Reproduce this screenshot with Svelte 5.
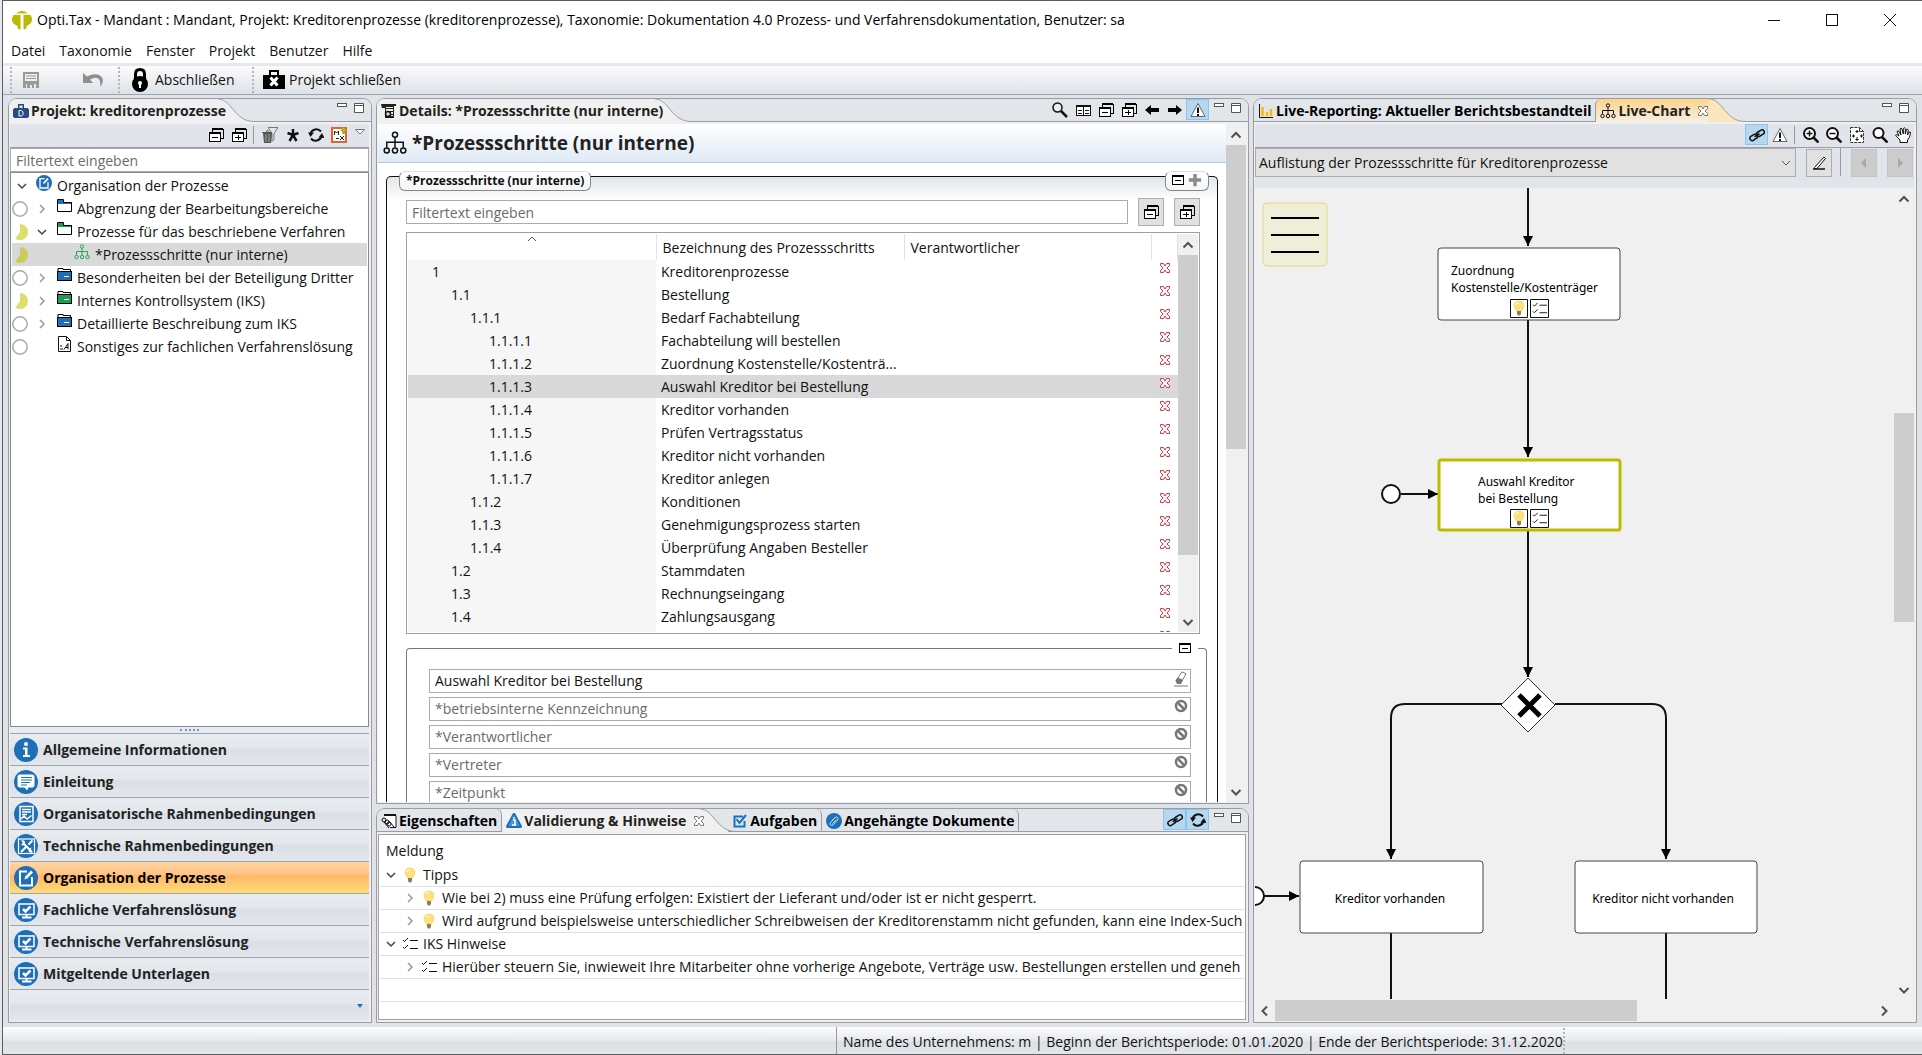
<script>
  const menu = ['Datei', 'Taxonomie', 'Fenster', 'Projekt', 'Benutzer', 'Hilfe'];

  const tree = [
    { label: 'Organisation der Prozesse', level: 0, open: true, icon: 'process' },
    { label: 'Abgrenzung der Bearbeitungsbereiche', level: 1, open: false, icon: 'folderBlue', state: 'empty' },
    { label: 'Prozesse für das beschriebene Verfahren', level: 1, open: true, icon: 'folderGreen', state: 'partial' },
    { label: '*Prozessschritte (nur interne)', level: 2, icon: 'orgGreen', state: 'partial', selected: true },
    { label: 'Besonderheiten bei der Beteiligung Dritter', level: 1, open: false, icon: 'folderBlueFull', state: 'empty' },
    { label: 'Internes Kontrollsystem (IKS)', level: 1, open: false, icon: 'folderGreenFull', state: 'partial' },
    { label: 'Detaillierte Beschreibung zum IKS', level: 1, open: false, icon: 'folderBlueFull', state: 'empty' },
    { label: 'Sonstiges zur fachlichen Verfahrenslösung', level: 1, icon: 'doc', state: 'empty' }
  ];

  const sections = [
    { label: 'Allgemeine Informationen', icon: 'info' },
    { label: 'Einleitung', icon: 'speech' },
    { label: 'Organisatorische Rahmenbedingungen', icon: 'report' },
    { label: 'Technische Rahmenbedingungen', icon: 'tools' },
    { label: 'Organisation der Prozesse', icon: 'process', active: true },
    { label: 'Fachliche Verfahrenslösung', icon: 'screen' },
    { label: 'Technische Verfahrenslösung', icon: 'screen' },
    { label: 'Mitgeltende Unterlagen', icon: 'screen' }
  ];

  const steps = [
    ['1', 'Kreditorenprozesse'],
    ['1.1', 'Bestellung'],
    ['1.1.1', 'Bedarf Fachabteilung'],
    ['1.1.1.1', 'Fachabteilung will bestellen'],
    ['1.1.1.2', 'Zuordnung Kostenstelle/Kostenträ...'],
    ['1.1.1.3', 'Auswahl Kreditor bei Bestellung'],
    ['1.1.1.4', 'Kreditor vorhanden'],
    ['1.1.1.5', 'Prüfen Vertragsstatus'],
    ['1.1.1.6', 'Kreditor nicht vorhanden'],
    ['1.1.1.7', 'Kreditor anlegen'],
    ['1.1.2', 'Konditionen'],
    ['1.1.3', 'Genehmigungsprozess starten'],
    ['1.1.4', 'Überprüfung Angaben Besteller'],
    ['1.2', 'Stammdaten'],
    ['1.3', 'Rechnungseingang'],
    ['1.4', 'Zahlungsausgang'],
    ['', '']
  ];
  const selectedStep = '1.1.1.3';

  const fields = ['*betriebsinterne Kennzeichnung', '*Verantwortlicher', '*Vertreter', '*Zeitpunkt'];

  const messages = [
    { text: 'Tipps', level: 0, open: true, icon: 'bulb' },
    { text: 'Wie bei 2) muss eine Prüfung erfolgen: Existiert der Lieferant und/oder ist er nicht gesperrt.', level: 1, icon: 'bulb' },
    { text: 'Wird aufgrund beispielsweise unterschiedlicher Schreibweisen der Kreditorenstamm nicht gefunden, kann eine Index-Such', level: 1, icon: 'bulb' },
    { text: 'IKS Hinweise', level: 0, open: true, icon: 'checks' },
    { text: 'Hierüber steuern Sie, inwieweit Ihre Mitarbeiter ohne vorherige Angebote, Verträge usw. Bestellungen erstellen und geneh', level: 1, icon: 'checks' }
  ];

  let step = $state('Auswahl Kreditor bei Bestellung');

  const indent = (nr) => 24 + 19 * (nr.split('.').length - 1);

  const folder = (color, full) =>
    full
      ? `<path d="M2 4V1.500h5v1h7.500V5" fill="#fff" stroke="#000"/><rect x="1.500" y="4.500" width="14" height="9" fill="${color}" stroke="#000"/><path d="M8 9.500h5" stroke="#fff"/>`
      : `<path d="M1.500 13.500V1.500H7.500V4.500H15.500V13.500Z" fill="#fff" stroke="#000"/><path d="M2 6V2h5v3h8V6Z" fill="${color}"/><path d="M7.500 4.500h8" stroke="#000"/>`;
  const org = (color) =>
    `<g fill="none" stroke="${color}"><circle cx="8" cy="2.500" r="1.700"/><path d="M8 4v7M2.500 11V7.500h11V11"/><circle cx="2.500" cy="13" r="1.700"/><circle cx="8" cy="13" r="1.700"/><circle cx="13.500" cy="13" r="1.700"/></g>`;
  const disc = '<circle cx="12" cy="12" r="12" fill="#1d70b8"/>';

  // [viewBox size, markup]
  const icons = {
    logo: [20, '<path d="M4 3.500Q10-2 16 3.500Z" fill="#bfc200"/><path d="M1.500 5H8.500V19.500Q6.500 19.500 5.500 18V16Q-3 12 1.500 5ZM18.500 5H11.500V19.500Q13.500 19.500 14.500 18V16Q23 12 18.500 5Z" fill="#b8bb00"/>'],
    save: [16, '<path d="M0 0h16v16h-3v-4h-2v4H9v-3H7v3H4v-4H3v4H0Z" fill="#999"/><path d="M2 2h12v7H2Z" fill="#eee"/><path d="M3 4h10M3 6.500h10" stroke="#999"/>'],
    undo: [20, '<path d="M0 3v10h10L7 9.500Q14 6 16.500 10 18 13 17 17 21.500 12 19 7.500 14 1.500 4 6.500Z" fill="#8e8e8e"/>'],
    lock: [24, '<path d="M7.500 12V6q0-4.500 4.500-4.500T16.500 6v6" fill="none" stroke="#000" stroke-width="3"/><ellipse cx="12" cy="16" rx="8" ry="8" fill="#000"/><circle cx="12" cy="15" r="2" fill="#fff"/><path d="M11 15h2v5h-2Z" fill="#fff"/>'],
    closeProject: [22, '<path d="M0 6h6V1h10v5h6v14H0ZM8 6h6V3H8Z" fill="#000"/><path d="M7.500 8.500l7 8m0-8l-7 8" stroke="#fff" stroke-width="3"/>'],
    briefcase: [16, '<path d="M1 5h4V1h6v4h4v10H1ZM6.500 5h3V2.500h-3Z" fill="#2a4a86"/><path d="M0 6h16v8H0Z" fill="#2a4a86"/><path d="M6 7.500h2.500l1.500 1.500v2.500L8.500 13H6Z" fill="none" stroke="#fff"/>'],
    collapse: [16, '<g shape-rendering="crispEdges"><path d="M4 5V2h11v9h-2" fill="none" stroke="#000"/><path d="M4 2h11" stroke="#000" stroke-width="2"/><rect x="1.500" y="6.500" width="11" height="8" fill="#fff" stroke="#000"/><path d="M1 6h12" stroke="#000" stroke-width="2"/><path d="M4 10.500h6" stroke="#000"/></g>'],
    expand: [16, '<g shape-rendering="crispEdges"><path d="M4 5V2h11v9h-2" fill="none" stroke="#000"/><path d="M4 2h11" stroke="#000" stroke-width="2"/><rect x="1.500" y="6.500" width="11" height="8" fill="#fff" stroke="#000"/><path d="M1 6h12" stroke="#000" stroke-width="2"/><path d="M4 10.500h6M7.500 8v5" stroke="#000"/></g>'],
    single: [16, '<g shape-rendering="crispEdges"><rect x="2.500" y="3.500" width="11" height="9" fill="#fff" stroke="#000"/><path d="M2 4h12" stroke="#000" stroke-width="2"/><path d="M5 8.500h6" stroke="#000"/></g>'],
    plus: [16, '<path d="M8 1v14M1 8h14" stroke="#8b8b8b" stroke-width="4"/>'],
    trashFilter: [16, '<path d="M6 .5h10l-4 6v6l-2 2V6.500Z" fill="#e8e8e8" stroke="#777"/><path d="M1 6h9l-1 10H2Z" fill="#555"/><path d="M4 7v8M7 7v8" stroke="#aaa"/><path d="M0 5.500h10M4 4h3" stroke="#555"/>'],
    star: [16, '<path d="M8 2v6M2.500 6L8 8l5.500-2M4.500 14L8 8l3.500 6" fill="none" stroke="#111" stroke-width="2.500"/>'],
    refresh: [16, '<path d="M13 4.500A6 6 0 0 0 2.500 7M3 11.500A6 6 0 0 0 13.500 9" fill="none" stroke="#111" stroke-width="2"/><path d="M0 5.500h6L2.500 10ZM10.500 10.500L14 6l2.500 5Z" fill="#111"/>'],
    mapping: [16, '<rect x="1" y="1" width="14" height="14" fill="#fff" stroke="#e8612d" stroke-width="2"/><path d="M3.500 8V4l2 2 2-2v4M9 9l4 4m0-4l-4 4M5 11.500h3" fill="none" stroke="#222"/><path d="M12.500 0L16 4h-2v3h-3V4H9Z" fill="#a9ba1c"/>'],
    menuDown: [12, '<path d="M1.500 3.500h9L6 8Z" fill="#fff" stroke="#777"/>'],
    min: [12, '<rect x="1.500" y="1.500" width="9" height="3" fill="#fff" stroke="#555"/>'],
    max: [12, '<path d="M1.500 1.500h9v9h-9ZM1.500 3.500h9" fill="#fff" stroke="#555"/>'],
    details: [16, '<path d="M0 1h15v2h-2v12H4V5H1Z" fill="#222"/><path d="M5 4h7v9H5Z" fill="#eee"/><path d="M5 5.500h7M8 8.500h4M10 11.500h2" stroke="#222"/><circle cx="7" cy="11" r="2.500" fill="#ddd" stroke="#111" stroke-width="1.500"/><path d="M9 13l2 2" stroke="#111"/>'],
    props: [16, '<path d="M3 2.500h12v12H9" fill="#fff" stroke="#111"/><path d="M3 2h12" stroke="#111" stroke-width="2"/><g fill="none" stroke="#111"><circle cx="3" cy="7" r="2"/><circle cx="6" cy="9" r="2"/><circle cx="8" cy="11" r="2"/><path d="M8 8l5 6M3 9l5 6"/></g>'],
    org: [16, org('#111')],
    orgGreen: [16, org('#2aa35a')],
    search: [16, '<circle cx="5.500" cy="5.500" r="4.500" fill="#e8edf0" stroke="#111" stroke-width="1.500"/><path d="M9 9l6 6" stroke="#111" stroke-width="2.500"/>'],
    zoomIn: [16, '<circle cx="6.500" cy="6.500" r="5.500" fill="#fff" stroke="#111" stroke-width="2"/><path d="M10.500 10.500l5 5" stroke="#111" stroke-width="2.500"/><path d="M3.500 6.500h6m-3-3v6" stroke="#111" stroke-width="1.500"/>'],
    zoomOut: [16, '<circle cx="6.500" cy="6.500" r="5.500" fill="#fff" stroke="#111" stroke-width="2"/><path d="M10.500 10.500l5 5" stroke="#111" stroke-width="2.500"/><path d="M3.500 6.500h6" stroke="#111" stroke-width="1.500"/>'],
    zoomAll: [16, '<circle cx="6.500" cy="6" r="5" fill="#fff" stroke="#111" stroke-width="2"/><path d="M10 10l5.500 5.500" stroke="#111" stroke-width="2.500"/>'],
    columns: [16, '<g shape-rendering="crispEdges"><rect x="1.500" y="3.500" width="14" height="10" fill="#fff" stroke="#111"/><path d="M1 4h15" stroke="#111" stroke-width="2"/><path d="M8.500 4v10M3 8.500h4M3 11.500h4M10 8.500h4M10 11.500h4" stroke="#111"/></g>'],
    back: [16, '<path d="M1 8l6-5v3h8v4H7v3Z" fill="#000"/>'],
    forward: [16, '<path d="M15 8L9 3v3H1v4h8v3Z" fill="#000"/>'],
    warn: [16, '<path d="M8 1.500l7 13H1Z" fill="#fff" stroke="#666"/><path d="M8 5.500V11M8 12v2" stroke="#111" stroke-width="2"/>'],
    bars: [16, '<path d="M1.500 1v13.500H15" fill="none" stroke="#111"/><path d="M4.500 4v9M9 9v4M13 6v7" stroke="#fbb900" stroke-width="2.500"/>'],
    close: [12, '<path d="M1.500 1.500h3L6 4l1.500-2.500h3v2L8 6l2.500 2.500v2h-3L6 8l-1.500 2.500h-3v-2L4 6 1.500 3.500Z" fill="#fff" stroke="#777"/>'],
    remove: [12, '<path d="M1.500 1.500h3L6 4l1.500-2.500h3v2L8 6l2.500 2.500v2h-3L6 8l-1.500 2.500h-3v-2L4 6 1.500 3.500Z" fill="#fff5f5" stroke="#cc3d4a"/>'],
    link: [16, '<g fill="none" stroke="#111" stroke-width="1.500" transform="rotate(-32 8 8)"><rect x="0" y="6" width="8" height="4.500" rx="2"/><rect x="8" y="6" width="8" height="4.500" rx="2"/><path d="M5 8.200h6"/></g>'],
    page: [16, '<path d="M1.500 .5h9l4 4v11h-13Z" fill="#fff" stroke="#333" stroke-dasharray="3 1"/><path d="M10.500 .5v4h4" fill="none" stroke="#333"/><path d="M8 3v3m0 4v4M3 9h3m5 0h3M6.500 4.500h3M6.500 12.500h3M4.500 7.500v3M12.500 7.500v3" stroke="#111"/>'],
    hand: [16, '<path d="M5 15.500V13Q3 11 .7 8.500q0-1.800 3.300.5L2 4.500q1-1.500 2 0L6 8 5 2q1-1.500 2 0L8.300 7V1.500q1.200-1.500 2 0V7l1.200-4.500q1.500-1 1.700.8L12.500 8l1.500-3q1.500-.5 1.500 1Q15 11 12.500 13v2.500Z" fill="#fff" stroke="#111"/>'],
    pen: [16, '<path d="M3.500 12.500L13 2l1.500 1.500L6 13.500H3.500Z" fill="#fff" stroke="#111"/><path d="M2 14h12" stroke="#111" stroke-width="1.500"/>'],
    prev: [16, '<path d="M10 3v10L5 8Z" fill="#a8a8a8"/>'],
    next: [16, '<path d="M6 3v10l5-5Z" fill="#a8a8a8"/>'],
    eraser: [16, '<path d="M3 9.500L9 .8l4 2L8 11.500q-3 1-5-2Z" fill="#fff" stroke="#777"/><path d="M2.500 9.500L5 6.500l5 2.500L8 13H4Z" fill="#777"/><path d="M1 15h14" stroke="#777"/>'],
    blocked: [14, '<circle cx="7" cy="7" r="5" fill="#fff" stroke="#777" stroke-width="2.500"/><path d="M3.500 3.500l7 7" stroke="#777" stroke-width="2.500"/>'],
    hint: [16, '<path d="M8 1.500l6.500 12H1.500Z" fill="#fff" stroke="#1d70b8" stroke-width="3" stroke-linejoin="round"/><path d="M8 2l5.500 11h-11Z" fill="#4b93d4"/><path d="M7 7h2v5h1M6 12h3M8 4v1.500" fill="none" stroke="#fff" stroke-width="1.500"/>'],
    task: [16, '<path d="M11 3.500H2.500v10h10V8" fill="#d8eafa" stroke="#1d70b8" stroke-width="2"/><path d="M4.500 6l3 4 6.500-8" fill="none" stroke="#1d70b8" stroke-width="2"/>'],
    attach: [16, '<circle cx="8" cy="8" r="8" fill="#1d70b8"/><path d="M5 9l4-4.500q1.500-1 2.500 0t0 2.500L7 12q-1.500 1-2.500 0t0-2.500L9 5M6.500 10.500L10 7" fill="none" stroke="#cfe3f5"/>'],
    bulb: [16, '<path d="M3 5.500Q3 1 8 1t5 4.500Q13 8 10.500 11h-5Q3 8 3 5.500Z" fill="#ffe07a" stroke="#f0c850" stroke-width=".5"/><path d="M5 5q0-2 3-2.500" fill="none" stroke="#fff4c0" stroke-width="1.500"/><path d="M6 11h4v3l-1 1.500H7L6 14Z" fill="#8a8060"/>'],
    checks: [16, '<path d="M1 4l1.500 1.500L6 2M1 11l1.500 1.500L6 9M8 4.500h8M8 12.500h8" fill="none" stroke="#111"/>'],
    folderBlue: [16, folder('#1d70b8', false)],
    folderGreen: [16, folder('#1f9c52', false)],
    folderBlueFull: [16, folder('#1d70b8', true)],
    folderGreenFull: [16, folder('#1f9c52', true)],
    doc: [16, '<path d="M2.500 .5h8l4 4v11h-12Z" fill="#fff" stroke="#111"/><path d="M10.500 .5v4h4M4 13h3M8 13.500l4-6v6M9 11.500h3M4 10h2" fill="none" stroke="#111"/>'],
    info: [24, disc + '<path d="M9 9.500h4.500V17H16v2H9v-2h2v-5.500H9Z" fill="#fff"/><circle cx="12" cy="6" r="2" fill="#fff"/>'],
    speech: [24, disc + '<path d="M6 4.500h12q2.500 0 2.500 2.500v8q0 2.500-2.500 2.500h-3.500L13 20.500l-2.500-3H6Q3.500 17.500 3.500 15V7Q3.500 4.500 6 4.500Z" fill="#fff"/><path d="M7 7.500h11M7 10h11M7 12.500h9M7 15h6" stroke="#1d70b8"/>'],
    report: [24, disc + '<rect x="6" y="4.500" width="13" height="15" fill="none" stroke="#fff" stroke-width="1.500"/><path d="M8 7.500h9M8 10h9M8 12.500h5M7 17l3-3 3 3 4.500-3.500" fill="none" stroke="#fff" stroke-width="1.500"/>'],
    tools: [24, disc + '<rect x="4.500" y="5" width="16" height="14.500" fill="none" stroke="#fff" stroke-width="1.200"/><path d="M9 9l9 9M18.500 6.500l-4 4M12 13l-5 5" stroke="#fff" stroke-width="2"/><path d="M7 6.500q4-1 4 2.500t-4 2l2-2ZM18.500 18.500q-4 .5-4-2t3-3l-1 2.500Z" fill="#fff"/>'],
    process: [24, disc + '<path d="M13 5.500H6v14h12V11" fill="none" stroke="#fff" stroke-width="2"/><path d="M10.500 13.500l.8-3L17 4.500l2 2-5.700 6Z" fill="#fff"/>'],
    screen: [24, disc + '<rect x="5" y="6" width="15" height="10.500" fill="none" stroke="#fff" stroke-width="1.500"/><path d="M9 11l2.500 2.500L16.500 8.500" fill="none" stroke="#fff" stroke-width="2.500"/><path d="M12.500 17v2.500M8 19.500h9.500" stroke="#fff" stroke-width="2"/>'],
    empty: [16, '<circle cx="8" cy="8" r="7.200" fill="#fff" stroke="#aaa" stroke-width="1.500"/>'],
    partial: [16, '<path d="M8 0A8 8 0 0 1 16 8 8 8 0 0 1 3.300 14.500L8 8Z" fill="#dede6c"/>'],
    partialSel: [16, '<path d="M8 0A8 8 0 0 1 16 8 8 8 0 0 1 3.300 14.500L8 8Z" fill="#cccc58"/>'],
    down: [12, '<path d="M2 4l4 4 4-4" fill="none" stroke="#444" stroke-width="1.500"/>'],
    right: [12, '<path d="M4 2l4 4-4 4" fill="none" stroke="#999" stroke-width="1.500"/>'],
    sbUp: [12, '<path d="M1.500 8.500L6 4l4.500 4.500" fill="none" stroke="#505050" stroke-width="2"/>'],
    sbDown: [12, '<path d="M1.500 4L6 8.500 10.500 4" fill="none" stroke="#505050" stroke-width="2"/>'],
    sbLeft: [12, '<path d="M8 1.500L3.500 6 8 10.500" fill="none" stroke="#505050" stroke-width="2"/>'],
    sbRight: [12, '<path d="M4 1.500L8.500 6 4 10.500" fill="none" stroke="#505050" stroke-width="2"/>'],
    winMin: [14, '<path d="M1 7.500h12" stroke="#111"/>'],
    winMax: [14, '<rect x="1.500" y="1.500" width="11" height="11" fill="none" stroke="#111"/>'],
    winClose: [14, '<path d="M1 1l12 12M13 1L1 13" stroke="#111"/>']
  };
</script>

{#snippet icon(name, size)}
  {@const box = icons[name]}
  <svg class="icon" width={size ?? box[0]} height={size ?? box[0]} viewBox="0 0 {box[0]} {box[0]}" aria-hidden="true">{@html box[1]}</svg>
{/snippet}

{#snippet tool(name, label, on)}
  <button class="tool" class:on aria-label={label}>{@render icon(name, 16)}</button>
{/snippet}

{#snippet windowButtons()}
  <button class="mini" aria-label="Minimieren">{@render icon('min')}</button>
  <button class="mini last" aria-label="Maximieren">{@render icon('max')}</button>
{/snippet}

{#snippet curve(fill)}
  <svg class="curve" width="36" height="23" viewBox="0 0 36 23" aria-hidden="true">
    <path d="M0 0C14 0 16 22.500 36 22.500V23H0Z" fill={fill} />
    <path d="M0 0C14 0 16 22.500 36 22.500" fill="none" stroke="#999da3" />
  </svg>
{/snippet}

{#snippet scrollbar(before, thumb, after, horizontal)}
  <div class="scrollbar" class:horizontal>
    <button aria-label="Zurück">{@render icon(horizontal ? 'sbLeft' : 'sbUp')}</button>
    <span style:flex-grow={before}></span>
    <span class="thumb" style:flex-grow={thumb}></span>
    <span style:flex-grow={after}></span>
    <button aria-label="Weiter">{@render icon(horizontal ? 'sbRight' : 'sbDown')}</button>
  </div>
{/snippet}

<div class="window">
  <header class="titlebar">
    {@render icon('logo')}
    <h1>Opti.Tax - Mandant : Mandant, Projekt: Kreditorenprozesse (kreditorenprozesse), Taxonomie: Dokumentation 4.0 Prozess- und Verfahrensdokumentation, Benutzer: sa</h1>
    <button aria-label="Fenster minimieren">{@render icon('winMin')}</button>
    <button aria-label="Fenster maximieren">{@render icon('winMax')}</button>
    <button aria-label="Fenster schließen">{@render icon('winClose')}</button>
  </header>

  <nav class="menu">
    {#each menu as item}
      <button>{item}</button>
    {/each}
  </nav>

  <div class="toolbar">
    <span class="grip"></span>
    <button class="save" aria-label="Speichern">{@render icon('save', 16)}</button>
    <button class="undo" aria-label="Rückgängig">{@render icon('undo', 20)}</button>
    <span class="grip"></span>
    <button class="lock">{@render icon('lock', 24)}Abschließen</button>
    <span class="grip"></span>
    <button class="close-project">{@render icon('closeProject', 22)}Projekt schließen</button>
  </div>

  <main>
    <section class="panel">
      <div class="tabs">
        <div class="tab active">{@render icon('briefcase', 16)}<span>Projekt: kreditorenprozesse</span></div>
        {@render curve('#f0f0f0')}
        <div class="tab-rest">{@render windowButtons()}</div>
      </div>
      <div class="panel-body">
        <div class="view-tools">
          {@render tool('collapse', 'Alle zuklappen')}
          {@render tool('expand', 'Alle aufklappen')}
          <span class="sep"></span>
          {@render tool('trashFilter', 'Filter löschen')}
          {@render tool('star', 'Pflichtfelder')}
          {@render tool('refresh', 'Aktualisieren')}
          {@render tool('mapping', 'Zuordnung')}
          <button class="drop" aria-label="Menü">{@render icon('menuDown')}</button>
        </div>
        <input class="tree-filter" placeholder="Filtertext eingeben" aria-label="Filtertext" />
        <ul class="tree">
          {#each tree as node}
            <li class="level{node.level}" class:selected={node.selected}>
              <span class="state">
                {#if node.state}{@render icon(node.selected ? 'partialSel' : node.state, 16)}{/if}
              </span>
              <span class="twisty">
                {#if node.open !== undefined}{@render icon(node.open ? 'down' : 'right')}{/if}
              </span>
              {@render icon(node.icon, 16)}
              <span>{node.label}</span>
            </li>
          {/each}
        </ul>
        <div class="sash"><span></span></div>
        <nav class="stack">
          {#each sections as section}
            <button class:active={section.active}>{@render icon(section.icon)}{section.label}</button>
          {/each}
          <div class="stack-end"><svg width="6" height="4" viewBox="0 0 6 4" aria-hidden="true"><path d="M0 0h6L3 4Z" fill="#2a6cc0" /></svg></div>
        </nav>
      </div>
    </section>

    <div class="center">
      <section class="panel details">
        <div class="tabs">
          <div class="tab active">{@render icon('details', 16)}<span>Details: *Prozessschritte (nur interne)</span></div>
          {@render curve('#f0f0f0')}
          <div class="tab-rest">
            {@render tool('search', 'Suchen')}
            {@render tool('columns', 'Spalten')}
            {@render tool('collapse', 'Alle zuklappen')}
            {@render tool('expand', 'Alle aufklappen')}
            {@render tool('back', 'Zurück')}
            {@render tool('forward', 'Vor')}
            {@render tool('warn', 'Validierung', true)}
            {@render windowButtons()}
          </div>
        </div>
        <div class="panel-body row">
          <div class="form">
            <div class="form-head">{@render icon('org', 24)}<h2>*Prozessschritte (nur interne)</h2></div>
            <div class="group">
              <h3 class="group-title">*Prozessschritte (nur interne)</h3>
              <div class="group-tools">
                <button aria-label="Zuklappen">{@render icon('single', 16)}</button>
                <button aria-label="Hinzufügen">{@render icon('plus', 14)}</button>
              </div>
              <div class="filter-row">
                <input placeholder="Filtertext eingeben" aria-label="Filtertext Prozessschritte" />
                <button class="push" aria-label="Alle zuklappen">{@render icon('collapse', 16)}</button>
                <button class="push" aria-label="Alle aufklappen">{@render icon('expand', 16)}</button>
              </div>
              <div class="grid">
                <div class="grid-view">
                  <table>
                    <colgroup><col class="c-nr" /><col class="c-name" /><col /><col class="c-del" /></colgroup>
                    <thead>
                      <tr>
                        <th class="sorted" aria-label="Nummer"><svg class="sort" width="10" height="6" viewBox="0 0 10 6" aria-hidden="true"><path d="M1 5l4-4 4 4" fill="none" stroke="#555" /></svg></th>
                        <th>Bezeichnung des Prozessschritts</th>
                        <th>Verantwortlicher</th>
                        <th aria-label="Löschen"></th>
                      </tr>
                    </thead>
                    <tbody>
                      {#each steps as [nr, name]}
                        <tr class:selected={nr === selectedStep}>
                          <td style:padding-left="{indent(nr)}px">{nr}</td>
                          <td>{name}</td>
                          <td></td>
                          <td class="del"><button aria-label="Löschen">{@render icon('remove')}</button></td>
                        </tr>
                      {/each}
                    </tbody>
                  </table>
                </div>
                {@render scrollbar(0, 300, 56)}
              </div>
              <div class="fields">
                <div class="fields-tools"><button aria-label="Zuklappen">{@render icon('single', 16)}</button></div>
                <div class="field">
                  <input bind:value={step} aria-label="Bezeichnung" />
                  <button aria-label="Leeren">{@render icon('eraser', 16)}</button>
                </div>
                {#each fields as field}
                  <div class="field">
                    <input placeholder={field} aria-label={field} />
                    <button aria-label="Nicht relevant">{@render icon('blocked', 14)}</button>
                  </div>
                {/each}
              </div>
            </div>
          </div>
          {@render scrollbar(0, 304, 332)}
        </div>
      </section>

      <section class="panel messages">
        <div class="tabs">
          <button class="tab edge">{@render icon('props', 16)}<span>Eigenschaften</span></button>
          <div class="tab active">{@render icon('hint', 16)}<span>Validierung &amp; Hinweise</span>{@render icon('close')}</div>
          {@render curve('#f0f0f0')}
          <button class="tab edge">{@render icon('task', 16)}<span>Aufgaben</span></button>
          <button class="tab edge">{@render icon('attach', 16)}<span>Angehängte Dokumente</span></button>
          <div class="tab-rest">
            {@render tool('link', 'Verknüpfen', true)}
            {@render tool('refresh', 'Aktualisieren', true)}
            {@render windowButtons()}
          </div>
        </div>
        <div class="panel-body">
          <div class="message-view">
            <table>
              <thead><tr><th>Meldung</th></tr></thead>
              <tbody>
                {#each messages as message}
                  <tr>
                    <td>
                      <div class="message" class:child={message.level}>
                        {@render icon(message.open ? 'down' : 'right')}
                        {@render icon(message.icon, 16)}
                        <span>{message.text}</span>
                      </div>
                    </td>
                  </tr>
                {/each}
                <tr><td></td></tr>
              </tbody>
            </table>
          </div>
        </div>
      </section>
    </div>

    <section class="panel">
      <div class="tabs">
        <button class="tab">{@render icon('bars', 16)}<span>Live-Reporting: Aktueller Berichtsbestandteil</span></button>
        <div class="tab active chart-tab">{@render icon('org', 16)}<span>Live-Chart</span>{@render icon('close')}</div>
        {@render curve('#fbe6bd')}
        <div class="tab-rest">{@render windowButtons()}</div>
      </div>
      <div class="panel-body">
        <div class="view-tools">
          {@render tool('link', 'Verknüpfen', true)}
          {@render tool('warn', 'Validierung')}
          <span class="sep"></span>
          {@render tool('zoomIn', 'Vergrößern')}
          {@render tool('zoomOut', 'Verkleinern')}
          {@render tool('page', 'Einpassen')}
          {@render tool('zoomAll', 'Originalgröße')}
          {@render tool('hand', 'Verschieben')}
        </div>
        <div class="chart-row">
          <div class="combo">
            <select aria-label="Diagramm">
              <option>Auflistung der Prozessschritte für Kreditorenprozesse</option>
            </select>
            <svg width="10" height="6" viewBox="0 0 10 6" aria-hidden="true"><path d="M1 1l4 4 4-4" fill="none" stroke="#555" /></svg>
          </div>
          <button class="push" aria-label="Bearbeiten">{@render icon('pen', 16)}</button>
          <span class="rule"></span>
          <button class="push off" disabled aria-label="Vorheriges">{@render icon('prev', 16)}</button>
          <button class="push off" disabled aria-label="Nächstes">{@render icon('next', 16)}</button>
        </div>
        <div class="chart-view">
          <svg class="diagram" role="img" aria-label="Prozessdiagramm">
            <defs>
              <marker id="arrow" viewBox="0 0 10 10" refX="10" refY="5" markerWidth="10" markerHeight="10" markerUnits="userSpaceOnUse" orient="auto">
                <path d="M0 0l10 5-10 5Z" />
              </marker>
            </defs>
            <rect x="8" y="15" width="64" height="63" rx="4" fill="#efefd9" stroke="#dcdc7e" />
            <path d="M16 30h48M16 47h48M16 64h48" stroke="#000" stroke-width="2" />

            <g fill="none" stroke="#111" stroke-width="2" marker-end="url(#arrow)">
              <path d="M273 0V58" />
              <path d="M273 132V269" />
              <path d="M273 343V489" />
              <path d="M146 306H183" />
              <path d="M247 516H150Q136 516 136 530V671" />
              <path d="M300 516H397Q411 516 411 530V671" />
              <path d="M9 708H44" />
            </g>
            <path d="M136 745V811M411 745V811" stroke="#111" stroke-width="2" />
            <circle cx="136" cy="306" r="9" fill="#fff" stroke="#111" stroke-width="2" />
            <circle cx="0" cy="708" r="9" fill="#fff" stroke="#111" stroke-width="2" />
            <path d="M273 490l27 27-27 27-27-27Z" fill="#fff" stroke="#333" />
            <path d="M264 507l21 21m0-21l-21 21" stroke="#000" stroke-width="5" />

            <rect class="node" x="183" y="60" width="182" height="72" rx="3" />
            <rect class="node current" x="184" y="272" width="181" height="70" rx="2" />
            <rect class="node" x="45" y="673" width="183" height="72" rx="3" />
            <rect class="node" x="320" y="673" width="182" height="72" rx="3" />

            <text x="196" y="87">Zuordnung</text>
            <text x="196" y="104">Kostenstelle/Kostenträger</text>
            <text x="223" y="298">Auswahl Kreditor</text>
            <text x="223" y="315">bei Bestellung</text>
            <text x="135" y="715" text-anchor="middle">Kreditor vorhanden</text>
            <text x="408" y="715" text-anchor="middle">Kreditor nicht vorhanden</text>

            {#each [111, 321] as y}
              <g transform="translate(255 {y})">
                <path d="M.5 .5h17v18H.5ZM20.500 .5h18v18h-18Z" fill="#fff" stroke="#111" />
                <svg x="1" y="1" width="16" height="16" viewBox="0 0 16 16">{@html icons.bulb[1]}</svg>
                <svg x="22" y="2" width="15" height="15" viewBox="0 0 16 16">{@html icons.checks[1]}</svg>
              </g>
            {/each}
          </svg>
          {@render scrollbar(203, 209, 356)}
          {@render scrollbar(0, 360, 236, true)}
        </div>
      </div>
    </section>
  </main>

  <footer class="status">
    <span class="status-space"></span>
    <p>Name des Unternehmens: m | Beginn der Berichtsperiode: 01.01.2020 | Ende der Berichtsperiode: 31.12.2020</p>
    <span class="grip"></span>
  </footer>
</div>

<style>
  :global(body) {
    margin: 0;
    background: #e4e8ee;
  }
  .window {
    display: flex;
    flex-direction: column;
    box-sizing: border-box;
    height: 100vh;
    margin-left: 2px;
    overflow: hidden;
    border: 1px solid #5c5c5c;
    border-right: 0;
    background: #dadee4;
    color: #111;
    font: 14px/20px 'Open Sans', 'Noto Sans', sans-serif;
  }
  button,
  input,
  select {
    box-sizing: border-box;
    margin: 0;
    padding: 0;
    border: 0;
    border-radius: 0;
    background: none;
    color: inherit;
    font: inherit;
  }
  h1,
  h2,
  h3,
  p,
  ul {
    margin: 0;
    padding: 0;
    font: inherit;
  }
  input {
    min-width: 0;
    border: 1px solid #ababab;
    background: #fff;
  }
  input::placeholder {
    color: #6b6b6b;
    opacity: 1;
  }
  .icon {
    flex: none;
    display: block;
  }
  table {
    width: 100%;
    table-layout: fixed;
    border-collapse: collapse;
  }

  /* window frame */
  .titlebar {
    display: flex;
    align-items: center;
    height: 38px;
    padding: 0 3px 0 9px;
    background: #fff;
    color: #000;
  }
  .titlebar h1 {
    flex: 1;
    margin-left: 5px;
    white-space: nowrap;
  }
  .titlebar button {
    display: grid;
    place-items: center;
    width: 58px;
    height: 36px;
  }
  .menu {
    display: flex;
    gap: 14px;
    height: 24px;
    padding-left: 8px;
    background: #fff;
  }
  .toolbar {
    display: flex;
    align-items: center;
    height: 28px;
    margin-top: 3px;
    padding-left: 7px;
    border-bottom: 1px solid #9ba7b7;
    background: linear-gradient(#fcfcfd, #e9ebef 60%, #dde1e6);
    box-shadow: 0 -3px #e7e8ea;
  }
  .toolbar button {
    display: flex;
    align-items: center;
  }
  .grip {
    height: 26px;
    border-left: 2px dotted #b5b5b5;
  }
  .save {
    width: 60px;
    padding-left: 11px;
  }
  .undo {
    width: 46px;
    padding-left: 11px;
  }
  .lock {
    gap: 3px;
    width: 132px;
    padding-left: 8px;
  }
  .close-project {
    gap: 4px;
    padding-left: 9px;
  }

  main {
    flex: 1;
    display: grid;
    grid-template-columns: 364px minmax(0, 873fr) minmax(0, 664fr);
    gap: 4px;
    min-height: 0;
    padding: 3px 5px 4px;
    background: #dfe3e8;
  }
  .center {
    display: flex;
    flex-direction: column;
    gap: 4px;
    min-height: 0;
  }

  /* view part with tab folder */
  .panel {
    display: flex;
    flex-direction: column;
    box-sizing: border-box;
    min-height: 0;
    overflow: hidden;
    border: 1px solid #999da3;
    border-radius: 9px 9px 0 0;
    background: #f0f0f0;
  }
  .panel-body {
    flex: 1;
    display: flex;
    flex-direction: column;
    min-height: 0;
    padding: 2px 2px 1px 1px;
  }
  .panel-body.row {
    flex-direction: row;
  }
  .tabs {
    display: flex;
    flex: none;
    height: 23px;
    background: #e2e6eb;
  }
  .tab {
    display: flex;
    align-items: center;
    gap: 2px;
    box-sizing: border-box;
    height: 23px;
    padding: 2px 4px 0;
    border-bottom: 1px solid #999da3;
    color: #000;
    font-weight: bold;
    white-space: nowrap;
  }
  .tab.edge {
    border-right: 1px solid #999da3;
    border-top-right-radius: 6px;
  }
  .tab.active {
    padding: 2px 0 1px 4px;
    border-bottom: 0;
    background: #f0f0f0;
    color: #222;
  }
  /* keeps the caption above the overlapping curve */
  .tab.active > :global(*) {
    position: relative;
    z-index: 1;
  }
  .tab.active .icon:last-child {
    margin-left: 5px;
  }
  .tab.chart-tab {
    border-left: 1px solid #999da3;
    border-top-left-radius: 6px;
    background: linear-gradient(#fcd58a, #f6efe2);
  }
  .curve {
    flex: none;
    margin-left: -8px;
  }
  .chart-tab + .curve {
    margin-left: 0;
  }
  .messages .curve {
    margin-left: -5px;
    margin-right: -8px;
  }
  .tab-rest {
    flex: 1;
    display: flex;
    justify-content: flex-end;
    border-bottom: 1px solid #999da3;
  }
  .tool {
    display: grid;
    place-items: center;
    width: 23px;
    height: 21px;
  }
  .tool.on {
    border: 1px solid #8cc4f0;
    background: #b5d7f0;
  }
  .mini {
    display: grid;
    place-items: start center;
    width: 19px;
    padding-top: 3px;
  }
  .mini.last {
    width: 16px;
    margin-right: 4px;
  }
  .view-tools {
    display: flex;
    flex: none;
    justify-content: flex-end;
    height: 23px;
    border-bottom: 1px solid #999da3;
    background: #e1e5eb;
  }
  .sep {
    width: 3px;
    height: 18px;
    margin: 2px 1px 0 3px;
    border-left: 1px solid #999;
  }
  .drop {
    display: grid;
    place-items: start center;
    width: 19px;
    padding-top: 2px;
  }

  /* project tree */
  .tree-filter {
    height: 24px;
    padding: 0 5px;
  }
  .tree {
    flex: 1;
    min-height: 0;
    overflow: hidden;
    padding: 1px;
    border: 1px solid #858a94;
    background: #fff;
    list-style: none;
  }
  .tree li {
    display: flex;
    align-items: center;
    height: 23px;
    white-space: nowrap;
  }
  .tree li.selected {
    background: #d9d9d9;
  }
  .tree li > .icon {
    margin: 0 1px 6px -1px;
  }
  .tree li > span:last-child {
    margin-left: 4px;
  }
  .state {
    width: 24px;
  }
  .level0 .state {
    width: 4px;
  }
  .twisty {
    width: 21px;
  }
  .level2 .twisty {
    width: 39px;
  }
  .sash {
    display: grid;
    place-items: center;
    height: 6px;
    background: #e8ebef;
  }
  .sash span {
    width: 19px;
    border-top: 2px dotted #6d9ad0;
  }
  .stack {
    display: flex;
    flex-direction: column;
  }
  .stack button,
  .stack-end {
    display: flex;
    align-items: center;
    gap: 5px;
    box-sizing: border-box;
    height: 32px;
    padding-left: 4px;
    border-top: 1px solid #9da5b1;
    background: linear-gradient(#e8ebf0, #e3e6eb 45%, #dbdfe5 50%, #e4e7ec);
    color: #222;
    font-weight: bold;
  }
  .stack button.active {
    background: linear-gradient(#ffd6a2, #ffc384 40%, #ffb768 45%, #ffdd78);
    color: #000;
  }
  .stack .stack-end {
    justify-content: flex-end;
    padding-right: 6px;
  }

  /* details form */
  .details {
    flex: 1;
  }
  .form {
    flex: 1;
    min-width: 0;
    overflow: hidden;
    background: #fff;
  }
  .form-head {
    display: flex;
    align-items: center;
    gap: 5px;
    height: 38px;
    padding-left: 5px;
    border-bottom: 1px solid #b3c8dd;
    background: linear-gradient(#fff, #e0e9f4);
  }
  .form-head h2 {
    font-size: 19px;
    font-weight: bold;
    line-height: 24px;
    color: #222;
  }
  .group {
    position: relative;
    margin: 13px 8px 0;
    padding: 21px 17px 40px 19px;
    border: 1px solid #111;
    border-bottom: 0;
    border-radius: 5px 5px 0 0;
    background: linear-gradient(#e2e5e8, #fff 24px);
  }
  .group-title,
  .group-tools {
    position: absolute;
    top: -6px;
    box-sizing: border-box;
    height: 20px;
    border: 1px solid #888;
    border-top-color: #ddd;
    border-radius: 6px;
    background: linear-gradient(#fff, #f4f6f8);
  }
  .group-title {
    left: 12px;
    padding: 0 6px;
    font-size: 12px;
    font-weight: bold;
    line-height: 18px;
  }
  .group-tools {
    right: 8px;
    display: flex;
    gap: 2px;
    padding: 0 6px 0 4px;
  }
  .group-tools button {
    height: 16px;
  }
  .filter-row {
    display: flex;
    align-items: center;
    gap: 10px;
  }
  .filter-row input {
    flex: 1;
    height: 24px;
    padding: 0 5px;
  }
  .push {
    display: grid;
    place-items: center;
    width: 26px;
    height: 28px;
    border: 1px solid #adadad;
    background: #e1e1e1;
  }
  .push.off {
    border-color: #c4c4c4;
    background: #ccc;
  }
  .grid {
    display: flex;
    box-sizing: border-box;
    height: 402px;
    margin-top: 6px;
    padding: 1px;
    border: 1px solid #a0a0a0;
    background: #fff;
  }
  .grid-view {
    flex: 1;
    min-width: 0;
    overflow: hidden;
  }
  .c-nr,
  .c-name {
    width: 248px;
  }
  .c-del {
    width: 26px;
  }
  .grid th {
    height: 24px;
    padding: 2px 6px 0;
    border-right: 1px solid #e0e0e0;
    font-weight: normal;
    text-align: left;
  }
  .grid .sorted {
    vertical-align: top;
  }
  .sort {
    display: block;
    margin: 0 auto;
  }
  .grid td {
    height: 23px;
    padding: 0 5px;
    line-height: 20px;
    white-space: nowrap;
  }
  .grid td:first-child {
    background: #f6f6f6;
  }
  .grid tr.selected td {
    background: #d9d9d9;
  }
  .grid td.del {
    padding: 0 7px;
    vertical-align: top;
  }
  .del button {
    display: block;
    padding-top: 2px;
  }
  .fields {
    position: relative;
    display: flex;
    flex-direction: column;
    gap: 4px;
    margin: 14px -7px 0 0;
    padding: 20px 15px 10px 22px;
    border: 1px solid #777;
    border-bottom: 0;
    border-radius: 4px 4px 0 0;
  }
  .fields-tools {
    position: absolute;
    top: -9px;
    right: 8px;
    padding: 0 5px;
    background: #fff;
  }
  .field {
    display: flex;
    height: 24px;
    box-sizing: border-box;
    border: 1px solid #ababab;
  }
  .field input {
    flex: 1;
    padding: 0 5px;
    border: 0;
  }
  .field button {
    display: grid;
    place-items: start center;
    width: 18px;
    padding-top: 1px;
  }

  .scrollbar {
    display: flex;
    flex: none;
    flex-direction: column;
    width: 20px;
    background: #f0f0f0;
  }
  .scrollbar button {
    display: grid;
    place-items: center;
    flex: none;
    width: 20px;
    height: 21px;
  }
  .scrollbar span {
    flex-basis: 0;
  }
  .scrollbar .thumb {
    background: #cdcdcd;
  }
  .scrollbar.horizontal {
    flex-direction: row;
    width: auto;
    height: 21px;
  }

  /* messages */
  .messages {
    flex: none;
    height: 215px;
  }
  .message-view {
    flex: 1;
    margin-bottom: 1px;
    padding: 0 1px;
    overflow: hidden;
    border: 1px solid #a0a0a0;
    background: #fff;
  }
  .message-view th {
    height: 27px;
    padding: 2px 6px 0;
    font-weight: normal;
    text-align: left;
  }
  .message-view td {
    height: 22px;
    padding: 0;
    border-bottom: 1px solid #e0e0e0;
    white-space: nowrap;
  }
  .message {
    display: flex;
    align-items: center;
    gap: 5px;
    padding-left: 5px;
  }
  .message.child {
    padding-left: 24px;
  }

  /* chart */
  .chart-row {
    display: flex;
    flex: none;
    align-items: flex-start;
    gap: 10px;
    height: 40px;
    padding-right: 1px;
    background: #e1e5eb;
  }
  .combo {
    flex: 1;
    display: flex;
    align-items: center;
    min-width: 0;
    box-sizing: border-box;
    height: 29px;
    border: 1px solid #adadad;
    background: #e1e1e1;
  }
  .combo select {
    flex: 1;
    min-width: 0;
    height: 27px;
    padding-left: 3px;
    appearance: none;
  }
  .combo svg {
    margin-right: 4px;
  }
  .chart-row .push {
    margin-top: 1px;
  }
  .rule {
    height: 28px;
    margin-left: -2px;
    border-left: 1px solid #999;
  }
  .chart-view {
    flex: 1;
    display: grid;
    grid-template: minmax(0, 1fr) 21px / minmax(0, 1fr) 20px;
    min-height: 0;
  }
  .diagram {
    width: 100%;
    height: 100%;
    font: 12px 'Noto Sans', sans-serif;
  }
  .node {
    fill: #fff;
    stroke: #444;
  }
  .node.current {
    stroke: #bdbd00;
    stroke-width: 3;
  }

  .status {
    display: flex;
    flex: none;
    align-items: center;
    height: 27px;
    background: linear-gradient(#fcfcfd, #e6e9ec 50%, #dce0e5 55%, #e2e5e9);
  }
  .status-space {
    flex: 835;
  }
  .status p {
    padding: 2px 0 0 6px;
    border-left: 1px solid #999;
    line-height: 25px;
    white-space: nowrap;
  }
  .status .grip {
    flex: 358;
  }
</style>
